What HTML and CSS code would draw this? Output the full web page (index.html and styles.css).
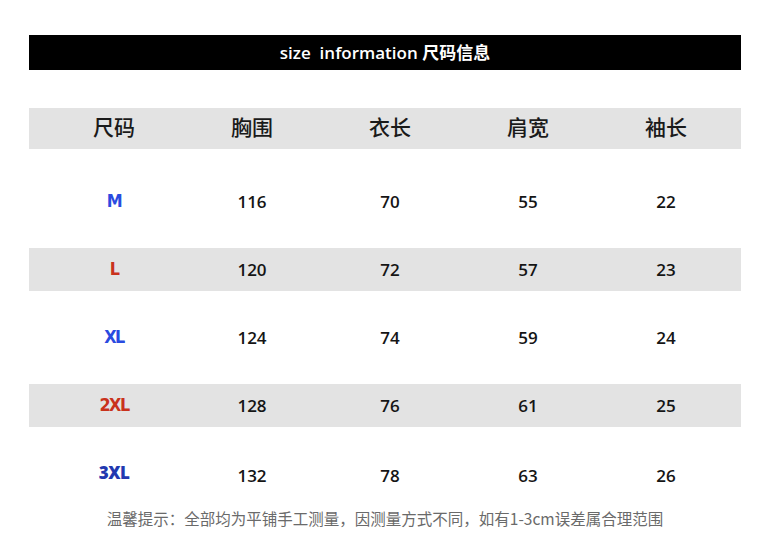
FILE: index.html
```html
<!DOCTYPE html>
<html lang="zh">
<head>
<meta charset="utf-8">
<link rel="stylesheet" href="styles.css">
</head>
<body>
<div class="page">
  <div class="title">size&nbsp; information 尺码信息</div>
  <div class="table">
    <div class="row head">
      <div>尺码</div><div>胸围</div><div>衣长</div><div>肩宽</div><div>袖长</div>
    </div>
    <div class="body">
      <div class="row"><div class="sz blue">M</div><div>116</div><div>70</div><div>55</div><div>22</div></div>
      <div class="row gray"><div class="sz red">L</div><div>120</div><div>72</div><div>57</div><div>23</div></div>
      <div class="row"><div class="sz blue">XL</div><div>124</div><div>74</div><div>59</div><div>24</div></div>
      <div class="row gray"><div class="sz red">2XL</div><div>128</div><div>76</div><div>61</div><div>25</div></div>
      <div class="row last"><div class="sz navy">3XL</div><div>132</div><div>78</div><div>63</div><div>26</div></div>
    </div>
  </div>
  <div class="note">温馨提示：全部均为平铺手工测量，因测量方式不同，如有1-3cm误差属合理范围</div>
</div>
</body>
</html>
```
FILE: styles.css
```css
html, body {
  margin: 0;
  padding: 0;
  background: #fff;
}
.page {
  width: 770px;
  height: 545px;
  padding: 35px 29px 0 29px;
  box-sizing: border-box;
  font-family: "Open Sans", "Noto Sans CJK SC", sans-serif;
  color: #111;
}
.title {
  height: 35px;
  background: #000;
  color: #fff;
  font-size: 17px;
  font-weight: 600;
  display: flex;
  align-items: center;
  justify-content: center;
  padding-bottom: 2px;
  box-sizing: border-box;
}
.table {
  margin-top: 38px;
}
.row {
  display: grid;
  grid-template-columns: repeat(5, 138px);
  padding-left: 16px;
  height: 43px;
  align-items: center;
  font-size: 17px;
  font-weight: 600;
  color: #151515;
}
.row > div {
  text-align: center;
}
.row.head {
  height: 41px;
  padding-bottom: 5px;
  box-sizing: border-box;
  background: #e3e3e3;
  font-size: 21px;
  font-weight: 500;
  font-family: "Noto Sans CJK SC", sans-serif;
  color: #1a1a1a;
}
.body {
  display: flex;
  flex-direction: column;
  gap: 25px;
  margin-top: 31px;
}
.row.gray {
  background: #e3e3e3;
}
.row.last {
  padding-top: 3px;
  box-sizing: border-box;
}
.sz {
  font-family: "DejaVu Sans", sans-serif;
  font-weight: 900;
  font-size: 16px;
  letter-spacing: -1.5px;
  transform: scaleY(1.05);
}
.blue { color: #2a4be0; }
.red { color: #c9321c; }
.navy { color: #2238b0; font-family: "Open Sans", sans-serif; font-weight: 800; font-size: 17px; letter-spacing: -0.5px; margin-top: -5px; }
.note {
  margin-top: 12px;
  text-align: center;
  font-size: 15.5px;
  color: #6a6a6a;
  font-family: "Noto Sans CJK SC", sans-serif;
}
```
